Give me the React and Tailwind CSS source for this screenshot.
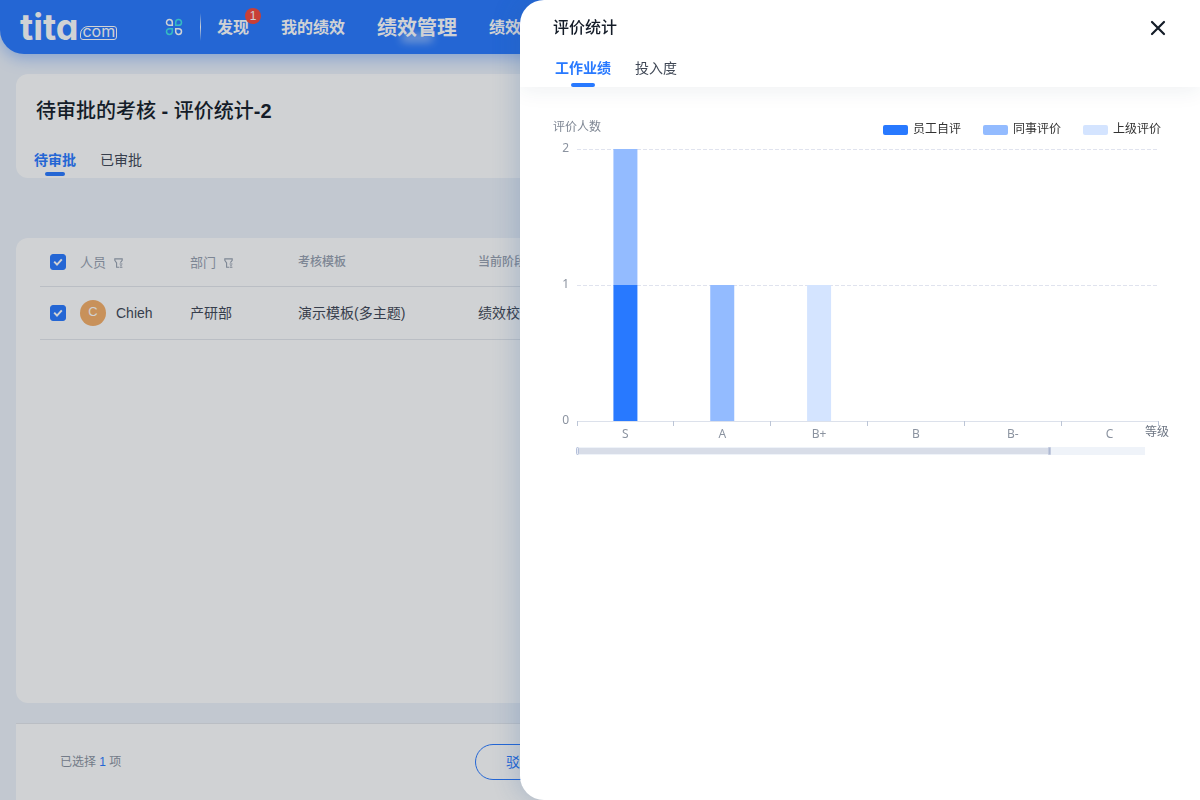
import React from "react";

const series = [
  { name: "员工自评", color: "#2879ff", values: [1, 0, 0, 0, 0, 0] },
  { name: "同事评价", color: "#93bbff", values: [1, 1, 0, 0, 0, 0] },
  { name: "上级评价", color: "#d4e4ff", values: [0, 0, 1, 0, 0, 0] },
];
const grades = ["S", "A", "B+", "B", "B-", "C"];

const plot = { left: 57, right: 638, base: 334, unit: 136, bar: 24 };
const band = (plot.right - plot.left) / grades.length;

function Logo() {
  return (
    <a href="#home" aria-label="tita.com" className="flex w-[97px] items-end gap-[2px] text-white">
      <span className="font-[Inter,sans-serif] text-[36px] leading-9 font-bold [font-feature-settings:'cv11']">tita</span>
      <span className="mb-[5px] flex h-[14px] items-center rounded-[3px] rounded-tl-[8px] border border-white px-px font-[Inter,sans-serif] text-base leading-3 font-normal">
        <span className="mb-1">com</span>
      </span>
    </a>
  );
}

function AppsIcon() {
  return (
    <svg width="18" height="18" viewBox="0 0 18 18" fill="none" strokeWidth="1.5">
      <path stroke="#fff" d="M7.3 7.3H4.4a2.9 2.9 0 1 1 2.9-2.9z" />
      <path stroke="#3fe3e8" d="M10.7 7.3V4.4a2.9 2.9 0 1 1 2.9 2.9z" />
      <path stroke="#3fe3e8" d="M7.3 10.7v2.9a2.9 2.9 0 1 1-2.9-2.9z" />
      <path stroke="#fff" d="M10.7 10.7h2.9a2.9 2.9 0 1 1-2.9 2.9z" />
    </svg>
  );
}

function FilterIcon() {
  return (
    <svg width="9" height="10" viewBox="0 0 9 10" fill="none" stroke="#98a1af" strokeWidth="1.1">
      <path d="M5 9.2H2.6V5L.8 2.4V.9h7.4v1.5L6.4 4.6" />
      <path d="M5.6 6h2.8M6.4 7.6h1.2M5.6 9.2h2.8" />
    </svg>
  );
}

function Check({ label }) {
  return (
    <label className="relative ml-[10px] block size-4">
      <input
        type="checkbox"
        defaultChecked
        aria-label={label}
        className="peer block size-4 appearance-none rounded-[3px] border border-[#2879ff] bg-white checked:bg-[#2879ff]"
      />
      <svg
        className="pointer-events-none absolute inset-0 hidden peer-checked:block"
        width="16"
        height="16"
        viewBox="0 0 16 16"
        fill="none"
        stroke="#fff"
        strokeWidth="2"
      >
        <path d="m4.2 7.6 2.8 3 4.8-5.2" />
      </svg>
    </label>
  );
}

function Header() {
  return (
    <header className="relative flex h-[54px] shrink-0 items-center rounded-bl-[24px] bg-[#2879ff] pl-5 whitespace-nowrap shadow-[0_4px_16px_rgba(40,121,255,0.4)]">
      <Logo />
      <button type="button" aria-label="应用" className="ml-12">
        <AppsIcon />
      </button>
      <span className="ml-[17px] h-7 w-px bg-linear-to-b from-white/0 via-white to-white/0" />
      <nav className="ml-4 flex items-center gap-8 pt-[2px] text-base font-bold text-white">
        <a href="#discover" className="relative">
          发现
          <span className="absolute -top-2 -right-3 flex size-4 items-center justify-center rounded-full bg-[#f5483b] text-xs font-normal">1</span>
        </a>
        <a href="#mine">我的绩效</a>
        <a href="#manage" className="relative text-xl">
          <span className="absolute bottom-0 left-6 h-2 w-8 rounded-full bg-white/50 blur-[4px]" />
          <span className="relative">绩效管理</span>
        </a>
        <a href="#settings">绩效设置</a>
      </nav>
    </header>
  );
}

function StaffTable() {
  return (
    <section className="ml-4 mt-[60px] flex-1 rounded-l-[12px] bg-white px-6">
      <table className="w-full table-fixed text-left whitespace-nowrap">
        <colgroup>
          <col className="w-10" />
          <col className="w-[110px]" />
          <col className="w-[108px]" />
          <col className="w-[180px]" />
          <col />
        </colgroup>
        <thead className="text-xs text-[#98a1af]">
          <tr className="h-12 border-b border-[#e4e7ec]">
            <th><Check label="全选" /></th>
            <th className="pt-[2px] text-[13px] font-normal">
              <span className="flex items-center gap-2">人员 <FilterIcon /></span>
            </th>
            <th className="pt-[2px] text-[13px] font-normal">
              <span className="flex items-center gap-2">部门 <FilterIcon /></span>
            </th>
            <th className="font-medium">考核模板</th>
            <th className="font-medium">当前阶段</th>
          </tr>
        </thead>
        <tbody className="text-sm text-[#3f4755]">
          <tr className="h-[53px] border-b border-[#e4e7ec]">
            <td><Check label="选择 Chieh" /></td>
            <td>
              <span className="flex items-center gap-[10px]">
                <span className="flex size-[26px] items-center justify-center rounded-full bg-[#f6ae67] text-[13px] text-white">C</span>
                Chieh
              </span>
            </td>
            <td>产研部</td>
            <td>演示模板(多主题)</td>
            <td>绩效校准</td>
          </tr>
        </tbody>
      </table>
    </section>
  );
}

function Chart() {
  const bars = [];
  grades.forEach((g, i) => {
    let sum = 0;
    series.forEach((s) => {
      const v = s.values[i];
      if (v) {
        bars.push(
          <rect
            key={g + s.name}
            x={plot.left + band * (i + 0.5) - plot.bar / 2}
            y={plot.base - (sum + v) * plot.unit}
            width={plot.bar}
            height={v * plot.unit}
            fill={s.color}
          />
        );
      }
      sum += v;
    });
  });
  return (
    <svg
      role="img"
      aria-label="评价统计"
      viewBox="0 0 680 380"
      className="block w-full font-['Noto_Sans','Noto_Sans_CJK_SC',sans-serif] text-xs"
    >
      <text x="33" y="44" fill="#7f8794">评价人数</text>
      {series.map((s, i) => (
        <g key={s.name}>
          <rect x={363 + i * 100} y="38" width="25" height="10" rx="2" fill={s.color} />
          <text x={393 + i * 100} y="46" fill="#333">{s.name}</text>
        </g>
      ))}
      {[1, 2].map((n) => (
        <path
          key={n}
          d={`M${plot.left} ${plot.base - n * plot.unit + 0.5}H${plot.right}`}
          stroke="#e0e3ee"
          strokeDasharray="4 2"
        />
      ))}
      {[0, 1, 2].map((n) => (
        <text key={n} x="49" y={plot.base - n * plot.unit + 3} textAnchor="end" fill="#8b93a0">{n}</text>
      ))}
      {bars}
      <path d={`M${plot.left} ${plot.base + 0.5}H${plot.right + 1}`} stroke="#dce1eb" />
      {[0, 1, 2, 3, 4, 5, 6].map((i) => (
        <path key={i} d={`M${Math.floor(plot.left + band * i) + 0.5} ${plot.base}v5`} stroke="#bcc5d6" />
      ))}
      {grades.map((g, i) => (
        <text key={g} x={plot.left + band * (i + 0.5)} y="351" textAnchor="middle" fill="#8b93a0">{g}</text>
      ))}
      <text x="625" y="349" fill="#6d7583">等级</text>
      <rect x="57" y="360" width="568" height="8" fill="#eff3f9" />
      <rect x="57" y="361" width="473" height="6" fill="#d8dde8" />
      <rect x="56.5" y="360.5" width="2" height="7" rx="1" fill="#e8ecf5" stroke="#b5c0da" />
      <rect x="528" y="360" width="3" height="8" rx="1" fill="#c2cade" />
      <path d="M529.5 361v6" stroke="#adb8d2" />
    </svg>
  );
}

function Drawer() {
  return (
    <aside
      role="dialog"
      aria-label="评价统计"
      className="fixed inset-y-0 right-0 flex w-[680px] max-w-full flex-col overflow-hidden rounded-l-[24px] bg-white shadow-[-4px_0_24px_rgba(40,90,160,0.22)]"
    >
      <div className="relative shadow-[0_4px_20px_rgba(30,50,90,0.07)]">
        <div className="flex h-14 items-center justify-between pr-[34px] pl-[33px]">
          <h2 className="text-base font-medium text-[#141c28]">评价统计</h2>
          <button type="button" aria-label="关闭">
            <svg width="16" height="16" viewBox="0 0 16 16" stroke="#141c28" strokeWidth="2.2" strokeLinecap="round">
              <path d="m2 2 12 12M14 2 2 14" />
            </svg>
          </button>
        </div>
        <div role="tablist" className="flex h-[31px] gap-6 pl-[35px] text-sm leading-6">
          <button type="button" role="tab" aria-selected="true" className="flex flex-col items-center justify-between font-bold text-[#2879ff]">
            工作业绩
            <span className="h-1 w-6 rounded-[2px] bg-[#2879ff]" />
          </button>
          <button type="button" role="tab" aria-selected="false" className="flex flex-col text-[#3f4755]">投入度</button>
        </div>
      </div>
      <Chart />
    </aside>
  );
}

export default function App() {
  return (
    <div className="font-['Liberation_Sans','Noto_Sans_CJK_SC',sans-serif]">
      <div className="flex h-screen flex-col overflow-hidden bg-[#eef3fa]">
        <Header />
        <section className="mt-5 ml-4 h-[104px] shrink-0 rounded-l-[12px] bg-white">
          <h1 className="px-5 pt-[22px] text-xl leading-[30px] font-medium text-[#141c28]">
            待审批的考核 <b>-</b> 评价统计<b>-2</b>
          </h1>
          <div role="tablist" className="mt-[22px] flex h-[30px] gap-6 pl-[18px] text-sm leading-6">
            <button type="button" role="tab" aria-selected="true" className="flex flex-col items-center font-bold text-[#2879ff]">
              待审批
              <span className="h-1 w-5 rounded-[2px] bg-[#2879ff]" />
            </button>
            <button type="button" role="tab" aria-selected="false" className="flex flex-col text-[#3f4755]">已审批</button>
          </div>
        </section>
        <StaffTable />
        <footer className="mt-5 ml-4 flex h-[77px] shrink-0 items-center border-t border-[#e4e7ec] bg-white pl-11">
          <p className="w-[415px] text-xs text-[#8b93a0]">
            已选择 <span className="text-[#2879ff]">1</span> 项
          </p>
          <button type="button" className="h-9 rounded-full border border-[#2879ff] px-[30px] text-sm text-[#2879ff]">驳回</button>
        </footer>
      </div>
      <div className="fixed inset-0 bg-[#141c28]/20" />
      <Drawer />
    </div>
  );
}
